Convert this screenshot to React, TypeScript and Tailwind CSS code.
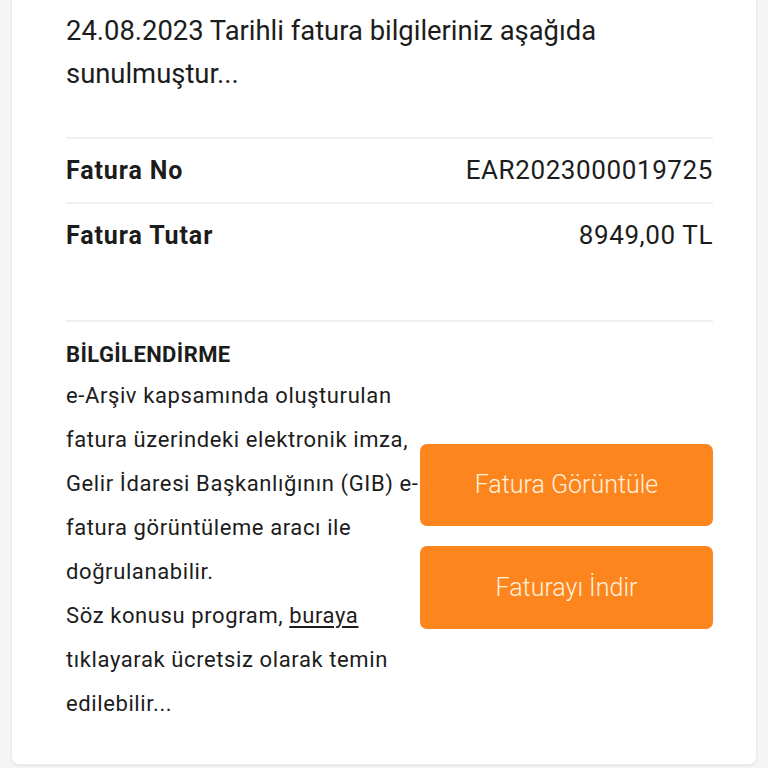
export default function App() {
  return (
    <div
      className="min-h-[768px] bg-[#f5f5f5] px-[11px] overflow-hidden"
      style={{ fontFamily: "Roboto, 'Noto Sans', sans-serif" }}
    >
      <div className="pt-[10px] bg-white rounded-b-[8px] shadow-[0_1px_2px_rgba(0,0,0,0.08)] border border-t-0 border-[#ececec] pl-[54px] pr-[43px] pb-[38px] text-[#1c1c1c]">
        <p className="text-[27.4px] leading-[43px]">
          24.08.2023 Tarihli fatura bilgileriniz aşağıda sunulmuştur...
        </p>

        <div className="mt-[41px] h-[2px] bg-[#f0f0f0]" />
        <div className="flex items-center justify-between h-[63px]">
          <span className="text-[25px] font-bold tracking-[0.9px]">Fatura No</span>
          <span className="text-[26px] tracking-[0.6px]">EAR2023000019725</span>
        </div>
        <div className="h-[2px] bg-[#f0f0f0]" />
        <div className="flex items-center justify-between h-[63px]">
          <span className="text-[25px] font-bold tracking-[0.9px]">Fatura Tutar</span>
          <span className="text-[26px] tracking-[0.6px]">8949,00 TL</span>
        </div>

        <div className="mt-[53px] h-[2px] bg-[#f0f0f0]" />

        <div className="flex items-start pt-[14px]">
          <div className="w-[354px] shrink-0">
            <div className="text-[22px] font-bold leading-[38px] tracking-[0.4px]">BİLGİLENDİRME</div>
            <p className="text-[22px] leading-[44px] tracking-[0.6px] whitespace-nowrap">
              e-Arşiv kapsamında oluşturulan
              <br />
              fatura üzerindeki elektronik imza,
              <br />
              Gelir İdaresi Başkanlığının (GIB) e-
              <br />
              fatura görüntüleme aracı ile
              <br />
              doğrulanabilir.
              <br />
              Söz konusu program, <a className="underline underline-offset-[3px]">buraya</a>
              <br />
              tıklayarak ücretsiz olarak temin
              <br />
              edilebilir...
            </p>
          </div>
          <div className="flex-1 flex flex-col gap-[20px] mt-[108px]">
            <button className="h-[82px] w-full rounded-[7px] bg-[#fd851e] text-[#fff1df] text-[25px] font-light">
              Fatura Görüntüle
            </button>
            <button className="h-[83px] w-full rounded-[7px] bg-[#fd851e] text-[#fff1df] text-[25px] font-light">
              Faturayı İndir
            </button>
          </div>
        </div>
      </div>
    </div>
  );
}
